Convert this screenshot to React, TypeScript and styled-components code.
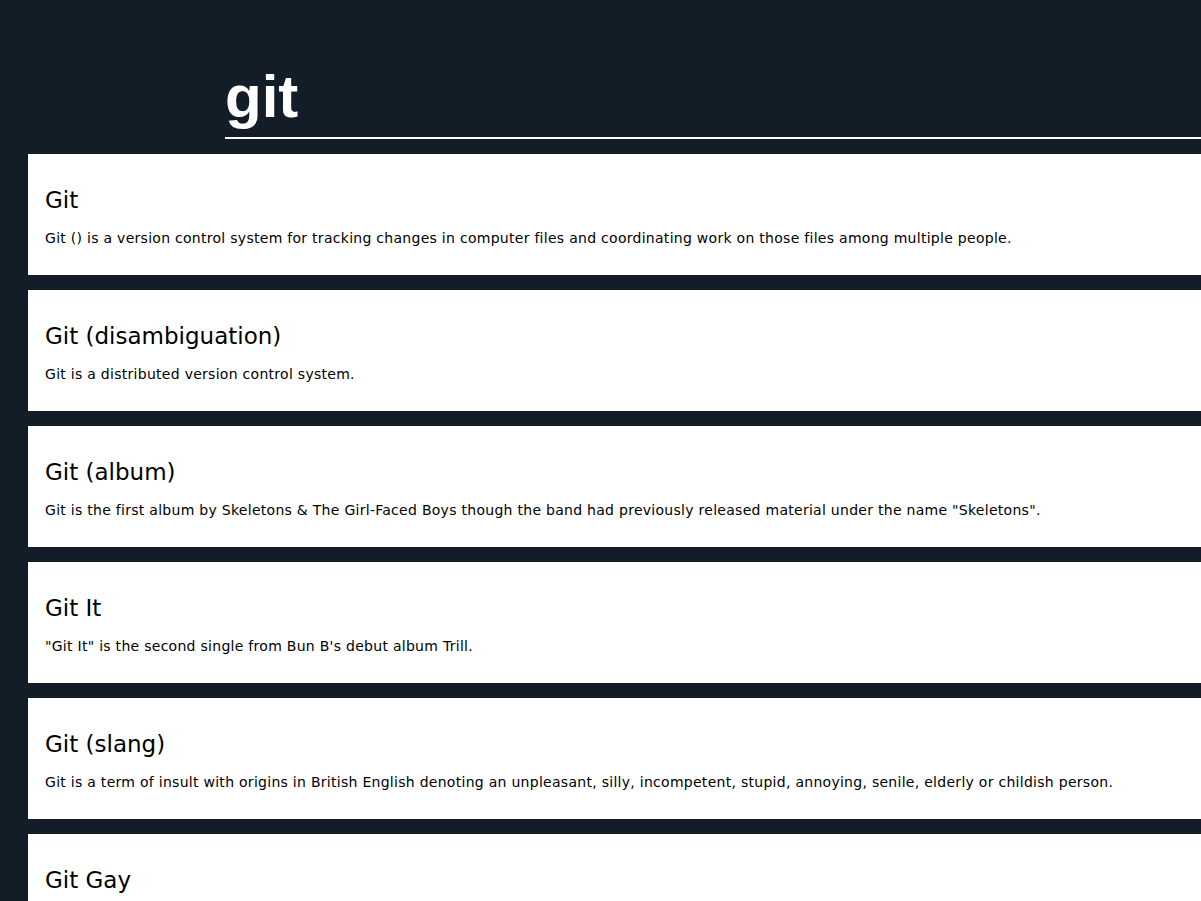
import React from "react";
import styled, { createGlobalStyle } from "styled-components";

const GlobalStyle = createGlobalStyle`
  html, body {
    margin: 0;
    padding: 0;
    background: #121d28;
    overflow: hidden;
  }
`;

const Page = styled.div`
  min-height: 901px;
  background: #121d28;
  display: flex;
  flex-direction: column;
`;

const Header = styled.header`
  padding: 61px 0 0 225px;
`;

const SearchTitle = styled.h1`
  margin: 0;
  font-family: "Liberation Sans", Arial, sans-serif;
  font-weight: 700;
  font-size: 60px;
  line-height: 72px;
  color: #ffffff;
  border-bottom: 2px solid #ffffff;
  padding-bottom: 4px;
`;

const Results = styled.main`
  display: flex;
  flex-direction: column;
  gap: 15px;
  padding: 15px 0 0 28px;
`;

const Card = styled.article`
  background: #ffffff;
  height: 121px;
  box-sizing: border-box;
  padding: 31px 17px 0;
  font-family: "DejaVu Sans", Verdana, sans-serif;
  color: #000000;
`;

const CardTitle = styled.h2`
  margin: 0;
  font-size: 23px;
  font-weight: 400;
  line-height: 30px;
`;

const CardText = styled.p`
  margin: 14px 0 0;
  font-size: 14px;
  letter-spacing: 0.28px;
  line-height: 18px;
`;

const results = [
  {
    title: "Git",
    text: "Git () is a version control system for tracking changes in computer files and coordinating work on those files among multiple people.",
  },
  { title: "Git (disambiguation)", text: "Git is a distributed version control system." },
  {
    title: "Git (album)",
    text: 'Git is the first album by Skeletons & The Girl-Faced Boys though the band had previously released material under the name "Skeletons".',
  },
  { title: "Git It", text: '"Git It" is the second single from Bun B\'s debut album Trill.' },
  {
    title: "Git (slang)",
    text: "Git is a term of insult with origins in British English denoting an unpleasant, silly, incompetent, stupid, annoying, senile, elderly or childish person.",
  },
  { title: "Git Gay", text: "" },
];

export default function App() {
  return (
    <Page>
      <GlobalStyle />
      <Header>
        <SearchTitle>git</SearchTitle>
      </Header>
      <Results>
        {results.map((r) => (
          <Card key={r.title}>
            <CardTitle>{r.title}</CardTitle>
            {r.text && <CardText>{r.text}</CardText>}
          </Card>
        ))}
      </Results>
    </Page>
  );
}
